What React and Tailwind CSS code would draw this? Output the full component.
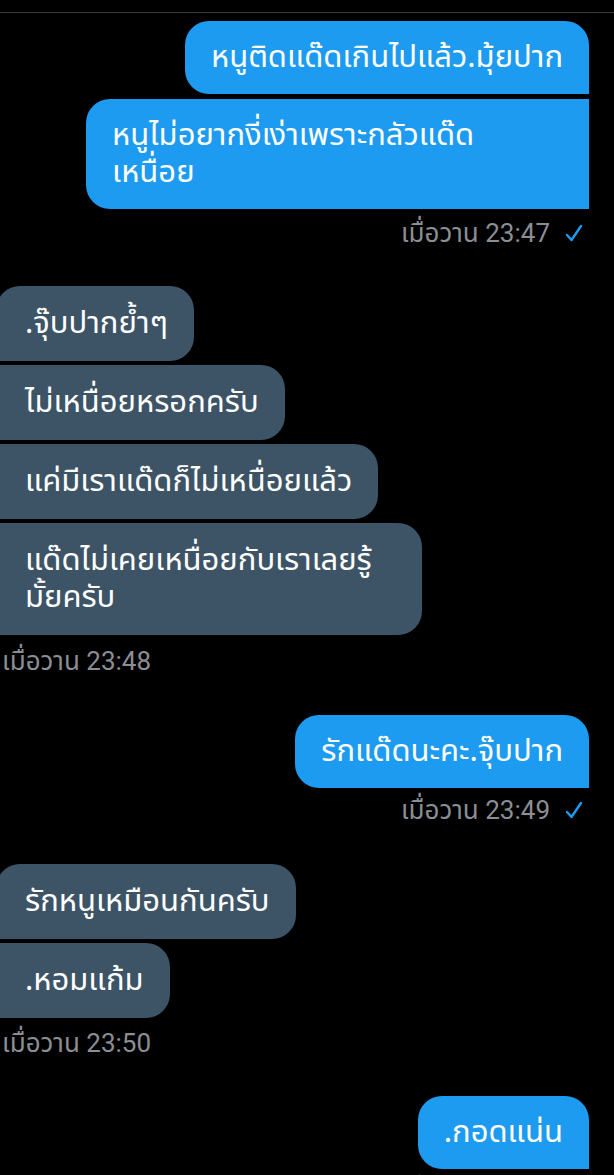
import React from "react";

const FONT = { fontFamily: '"Noto Sans Thai", "Noto Sans Thai UI", "Noto Sans", Roboto, sans-serif' };
const STAMP_FONT = { fontFamily: 'Roboto, "Noto Sans Thai", "Noto Sans", sans-serif' };

function Check() {
  return (
    <svg width="18" height="20" viewBox="0 0 18 20" className="ml-[15px]">
      <path d="M2 12 L6.5 17 L16 3" fill="none" stroke="#1d9bf0" strokeWidth="2.4" strokeLinecap="round" strokeLinejoin="round" />
    </svg>
  );
}

function Sent({ children, first, className = "", wide = false }) {
  return (
    <div className={`flex justify-end ${className}`}>
      <div
        className={`bg-[#1d9bf0] text-white text-[31px] leading-[37px] px-[26px] py-[18px] rounded-l-[24px] ${first ? "rounded-tr-[24px]" : ""} ${wide ? "w-[503px]" : ""} whitespace-nowrap`}
      >
        {children}
      </div>
    </div>
  );
}

function Recv({ children, first, className = "", wide = false }) {
  return (
    <div className={`flex justify-start ${className}`}>
      <div
        className={`bg-[#3d5466] text-white text-[31px] leading-[37px] pl-[29px] pr-[26px] py-[19px] ml-[-4px] rounded-r-[24px] ${first ? "rounded-tl-[24px]" : ""} ${wide ? "w-[426px]" : ""} whitespace-nowrap`}
      >
        {children}
      </div>
    </div>
  );
}

function StampRight({ text, className = "" }) {
  return (
    <div className={`flex justify-end items-center pr-[31px] ${className}`}>
      <span className="text-[26px] leading-[28px] text-[#8b8f94]" style={STAMP_FONT}>{text}</span>
      <Check />
    </div>
  );
}

function StampLeft({ text, className = "" }) {
  return (
    <div className={`flex justify-start items-center pl-[2px] ${className}`}>
      <span className="text-[26px] leading-[28px] text-[#8b8f94]" style={STAMP_FONT}>{text}</span>
    </div>
  );
}

export default function App() {
  return (
    <div className="w-[614px] h-[1175px] bg-black overflow-hidden" style={FONT}>
      <div className="h-[13px] border-b border-[#3a3a3c]" />
      <div className="flex flex-col pr-[25px]">
        <Sent first className="mt-[8px]">หนูติดแด๊ดเกินไปแล้ว.มุ้ยปาก</Sent>
        <Sent wide className="mt-[5px]">
          หนูไม่อยากงี่เง่าเพราะกลัวแด๊ด
          <br />
          เหนื่อย
        </Sent>
      </div>
      <StampRight text="เมื่อวาน 23:47" className="mt-[10px]" />

      <div className="flex flex-col mt-[39px]">
        <Recv first>.จุ๊บปากย้ำๆ</Recv>
        <Recv className="mt-[4px]">ไม่เหนื่อยหรอกครับ</Recv>
        <Recv className="mt-[4px]">แค่มีเราแด๊ดก็ไม่เหนื่อยแล้ว</Recv>
        <Recv wide className="mt-[4px]">
          แด๊ดไม่เคยเหนื่อยกับเราเลยรู้
          <br />
          มั้ยครับ
        </Recv>
      </div>
      <StampLeft text="เมื่อวาน 23:48" className="mt-[12px]" />

      <div className="flex flex-col pr-[25px] mt-[40px]">
        <Sent first>รักแด๊ดนะคะ.จุ๊บปาก</Sent>
      </div>
      <StampRight text="เมื่อวาน 23:49" className="mt-[8px]" />

      <div className="flex flex-col mt-[40px]">
        <Recv first>รักหนูเหมือนกันครับ</Recv>
        <Recv className="mt-[4px]">.หอมแก้ม</Recv>
      </div>
      <StampLeft text="เมื่อวาน 23:50" className="mt-[11px]" />

      <div className="flex flex-col pr-[25px] mt-[39px]">
        <Sent first>.กอดแน่น</Sent>
      </div>
      <StampRight text="เมื่อวาน 23:51" className="mt-[9px]" />
    </div>
  );
}
